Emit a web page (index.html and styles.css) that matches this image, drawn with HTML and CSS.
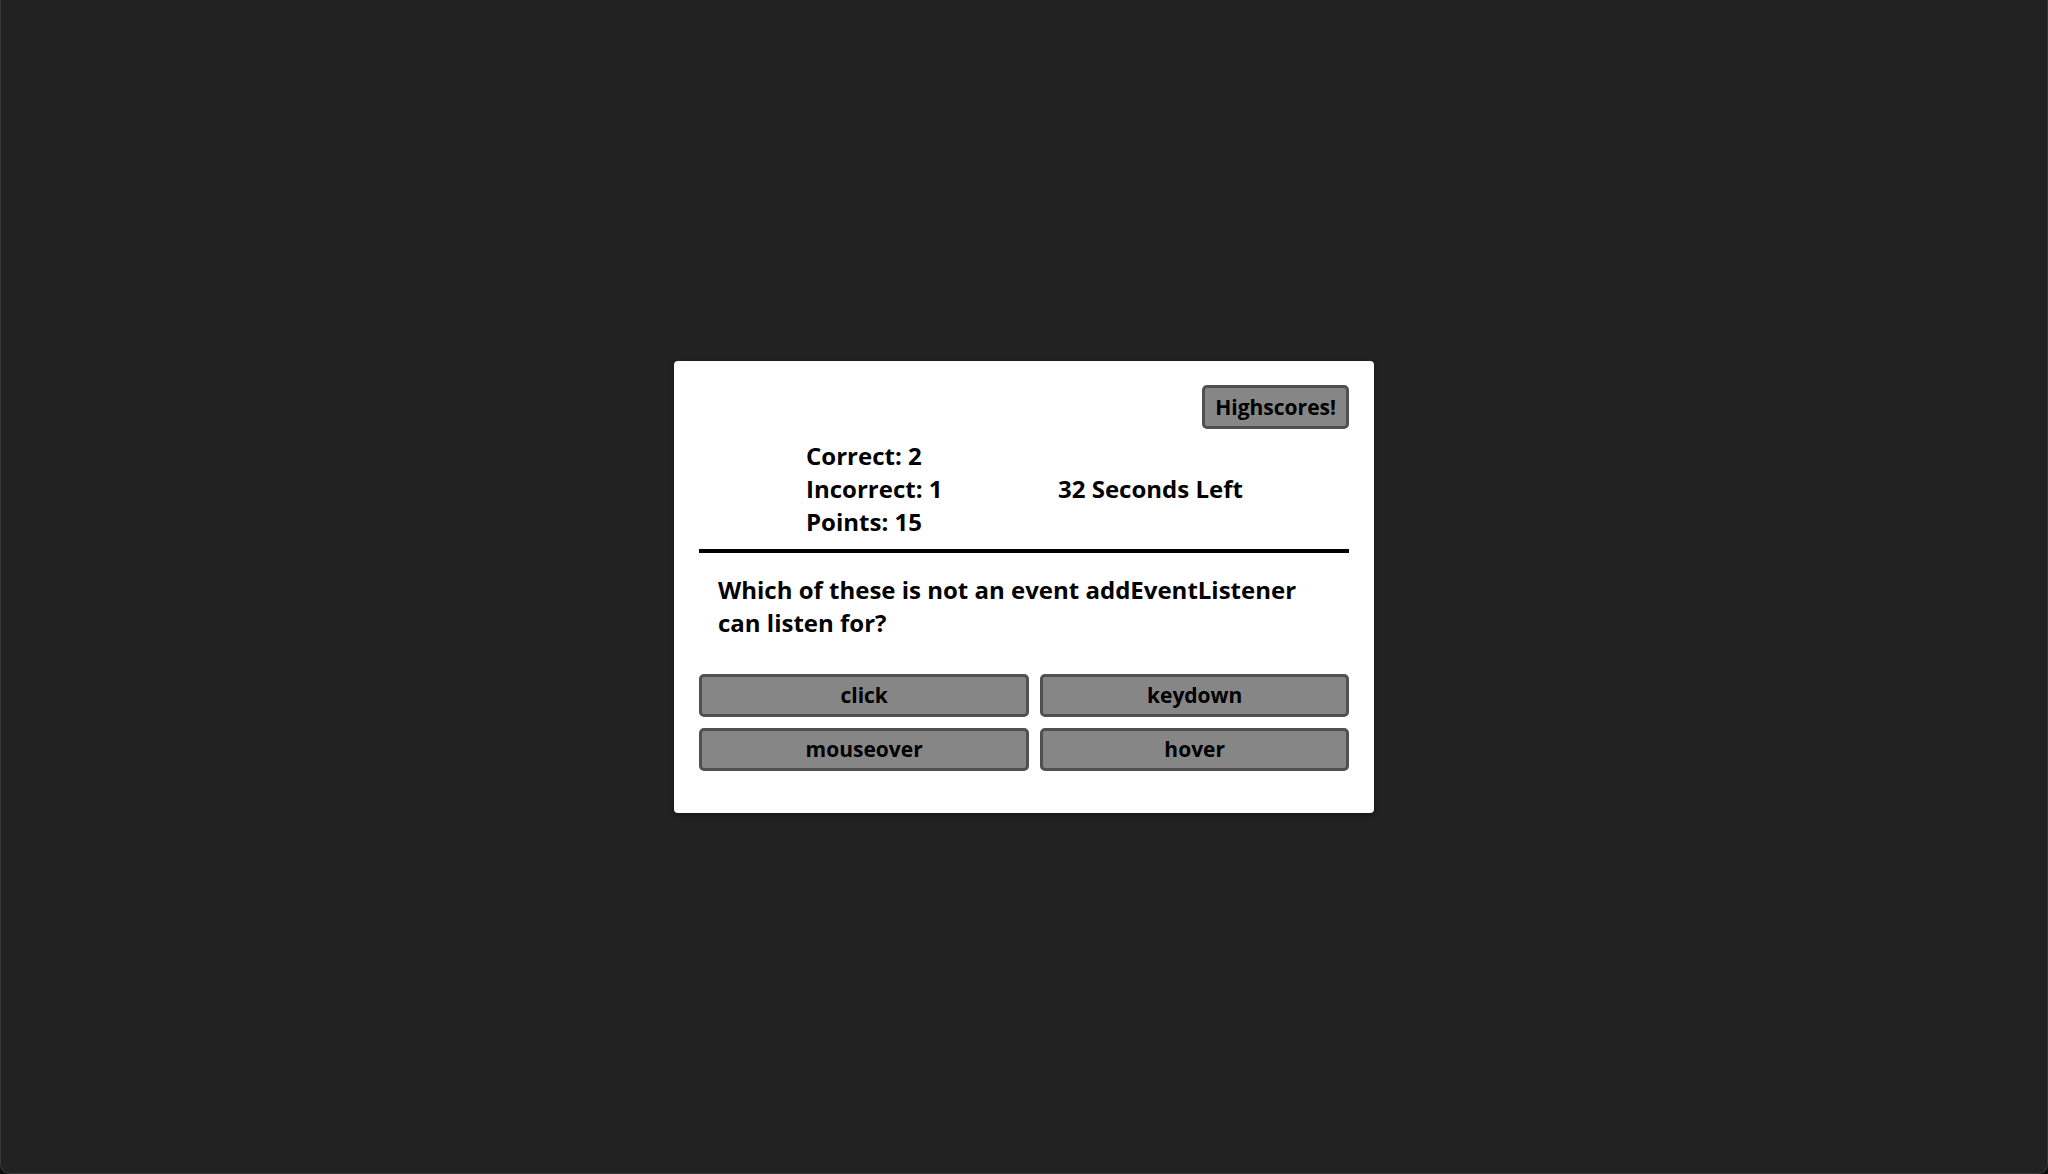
FILE: index.html
```html
<!DOCTYPE html>
<html lang="en">
<head>
<meta charset="utf-8">
<title>Quiz</title>
<link rel="stylesheet" href="styles.css">
</head>
<body>
<div class="frame">
  <main class="card">
    <div class="top-row">
      <button class="btn btn-highscores">Highscores!</button>
    </div>
    <div class="status">
      <div class="stats">
        <div>Correct: 2</div>
        <div>Incorrect: 1</div>
        <div>Points: 15</div>
      </div>
      <div class="timer">32 Seconds Left</div>
    </div>
    <hr class="divider">
    <p class="question">Which of these is not an event addEventListener can listen for?</p>
    <div class="answers">
      <button class="btn answer">click</button>
      <button class="btn answer">keydown</button>
      <button class="btn answer">mouseover</button>
      <button class="btn answer">hover</button>
    </div>
  </main>
</div>
</body>
</html>
```

FILE: styles.css
```css
html, body {
  margin: 0;
  padding: 0;
  height: 100%;
  background: #111;
}
body {
  font-family: "Open Sans", "Liberation Sans", sans-serif;
  font-weight: 700;
  color: #000;
}
.frame {
  box-sizing: border-box;
  height: 100vh;
  background: #222222;
  border-left: 1px solid #3a3a3a;
  border-right: 1px solid #3a3a3a;
  border-bottom: 1px solid #3a3a3a;
  border-radius: 0 0 10px 10px;
  display: flex;
  align-items: center;
  justify-content: center;
}
.card {
  box-sizing: border-box;
  width: 700px;
  height: 452px;
  background: #fff;
  border-radius: 4px;
  padding: 24px 25px 25px;
  box-shadow: 0 2px 6px rgba(0,0,0,0.4);
}
.top-row {
  display: flex;
  justify-content: flex-end;
}
.btn {
  box-sizing: border-box;
  font-family: inherit;
  font-weight: 700;
  color: #000;
  background: #868686;
  border: 3px solid #505050;
  border-radius: 5px;
  cursor: pointer;
}
.btn-highscores {
  font-size: 21px;
  height: 44px;
  line-height: 28px;
  padding: 0 10px;
}
.status {
  display: grid;
  grid-template-columns: 252px auto;
  align-items: center;
  padding-left: 107px;
  margin-top: 10px;
  font-size: 24px;
}
.divider {
  margin: 11px 0 0;
  border: 0;
  height: 4px;
  background: #000;
}
.question {
  margin: 20px 0 0;
  padding: 0 19px;
  font-size: 24px;
  line-height: 33px;
}
.answers {
  margin-top: 35px;
  display: grid;
  grid-template-columns: auto auto;
  gap: 11px 11px;
}
.answer {
  font-size: 21px;
  line-height: 28px;
  height: 43px;
  padding: 0 10px;
}
```
